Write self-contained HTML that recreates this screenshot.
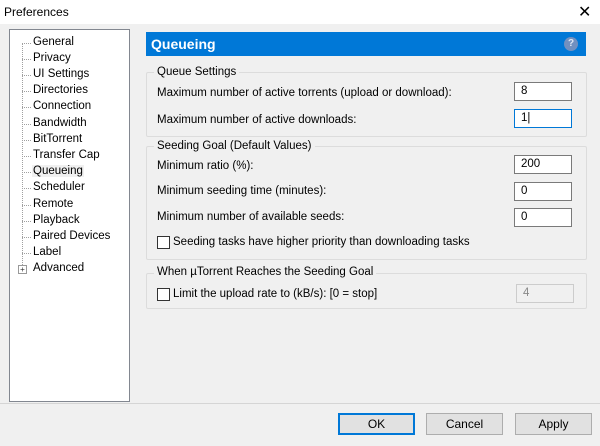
<!DOCTYPE html>
<html><head><style>
body{margin:0;width:600px;height:446px;background:#f0f0f0;font-family:"Liberation Sans",sans-serif;font-size:11.5px;color:#000;position:relative;overflow:hidden}
.a{position:absolute}
.title{left:0;top:0;width:600px;height:24px;background:#fff}
.tree{left:9px;top:29px;width:119px;height:371px;background:#fff;border:1px solid #828790}
.ti{position:absolute;left:23px;white-space:nowrap}
.dot{position:absolute;left:12px;width:9px;border-top:1px dotted #a0a0a0}
.vl{position:absolute;left:12px;top:14px;height:229px;border-left:1px dotted #a0a0a0}
.hdr{left:146px;top:32px;width:440px;height:24px;background:#0078d7;color:#fff;font-weight:bold;font-size:14px}
.grp{border:1px solid #dcdcdc;border-radius:2px}
.lg{background:#f0f0f0;padding:0 3px}
.inp{background:#fff;border:1px solid #7a7a7a;height:19px;width:58px;box-sizing:border-box;padding:2px 6px}
.cb{width:11px;height:11px;border:1px solid #333;background:#fff}
.btn{height:22px;width:77px;box-sizing:border-box;border:1px solid #adadad;background:#e1e1e1;text-align:center;line-height:20px;font-size:12px}
</style></head><body>
<div class="a title"></div>
<div class="a" style="left:4px;top:5px;font-size:12px">Preferences</div>
<div class="a" style="left:578px;top:2px;font-size:16px">✕</div>
<div class="a tree">
<div class="vl"></div>
<div class="dot" style="top:13px"></div><div class="ti" style="top:6px">General</div>
<div class="dot" style="top:29px"></div><div class="ti" style="top:22px">Privacy</div>
<div class="dot" style="top:45px"></div><div class="ti" style="top:38px">UI Settings</div>
<div class="dot" style="top:61px"></div><div class="ti" style="top:54px">Directories</div>
<div class="dot" style="top:77px"></div><div class="ti" style="top:70px">Connection</div>
<div class="dot" style="top:94px"></div><div class="ti" style="top:87px">Bandwidth</div>
<div class="dot" style="top:110px"></div><div class="ti" style="top:103px">BitTorrent</div>
<div class="dot" style="top:126px"></div><div class="ti" style="top:119px">Transfer Cap</div>
<div class="dot" style="top:142px"></div><div class="ti" style="top:135px;background:#f0f0f0;padding:0 1px;left:22px">Queueing</div>
<div class="dot" style="top:158px"></div><div class="ti" style="top:151px">Scheduler</div>
<div class="dot" style="top:175px"></div><div class="ti" style="top:168px">Remote</div>
<div class="dot" style="top:191px"></div><div class="ti" style="top:184px">Playback</div>
<div class="dot" style="top:207px"></div><div class="ti" style="top:200px">Paired Devices</div>
<div class="dot" style="top:223px"></div><div class="ti" style="top:216px">Label</div>
<div style="position:absolute;left:8px;top:235px;width:7px;height:7px;border:1px solid #999;background:#fff;font-size:8px;line-height:7px;text-align:center;color:#333">+</div>
<div class="ti" style="top:232px">Advanced</div>
</div>
<div class="a hdr"><span style="position:absolute;left:5px;top:4px">Queueing</span>
<div style="position:absolute;right:8px;top:5px;width:14px;height:14px;border-radius:50%;background:#7190c0;color:#dfe8f5;font-size:10px;text-align:center;line-height:14px">?</div></div>

<div class="a grp" style="left:146px;top:72px;width:439px;height:63px"></div>
<div class="a lg" style="left:154px;top:66px">Queue Settings</div>
<div class="a" style="left:157px;top:87px">Maximum number of active torrents (upload or download):</div>
<div class="a inp" style="left:514px;top:82px">8</div>
<div class="a" style="left:157px;top:114px">Maximum number of active downloads:</div>
<div class="a inp" style="left:514px;top:109px;border-color:#0078d7">1|</div>

<div class="a grp" style="left:146px;top:146px;width:439px;height:112px"></div>
<div class="a lg" style="left:154px;top:140px">Seeding Goal (Default Values)</div>
<div class="a" style="left:157px;top:160px">Minimum ratio (%):</div>
<div class="a inp" style="left:514px;top:155px">200</div>
<div class="a" style="left:157px;top:185px">Minimum seeding time (minutes):</div>
<div class="a inp" style="left:514px;top:182px">0</div>
<div class="a" style="left:157px;top:211px">Minimum number of available seeds:</div>
<div class="a inp" style="left:514px;top:208px">0</div>
<div class="a cb" style="left:157px;top:236px"></div>
<div class="a" style="left:173px;top:236px">Seeding tasks have higher priority than downloading tasks</div>

<div class="a grp" style="left:146px;top:273px;width:439px;height:34px"></div>
<div class="a lg" style="left:154px;top:266px">When µTorrent Reaches the Seeding Goal</div>
<div class="a cb" style="left:157px;top:288px"></div>
<div class="a" style="left:173px;top:288px">Limit the upload rate to (kB/s): [0 = stop]</div>
<div class="a inp" style="left:516px;top:284px;border-color:#ccc;background:#f0f0f0;color:#888">4</div>

<div class="a" style="left:0;top:403px;width:600px;border-top:1px solid #d5d5d5"></div>
<div class="a btn" style="left:338px;top:413px;border:2px solid #0078d7;line-height:18px">OK</div>
<div class="a btn" style="left:426px;top:413px">Cancel</div>
<div class="a btn" style="left:515px;top:413px">Apply</div>
</body></html>
